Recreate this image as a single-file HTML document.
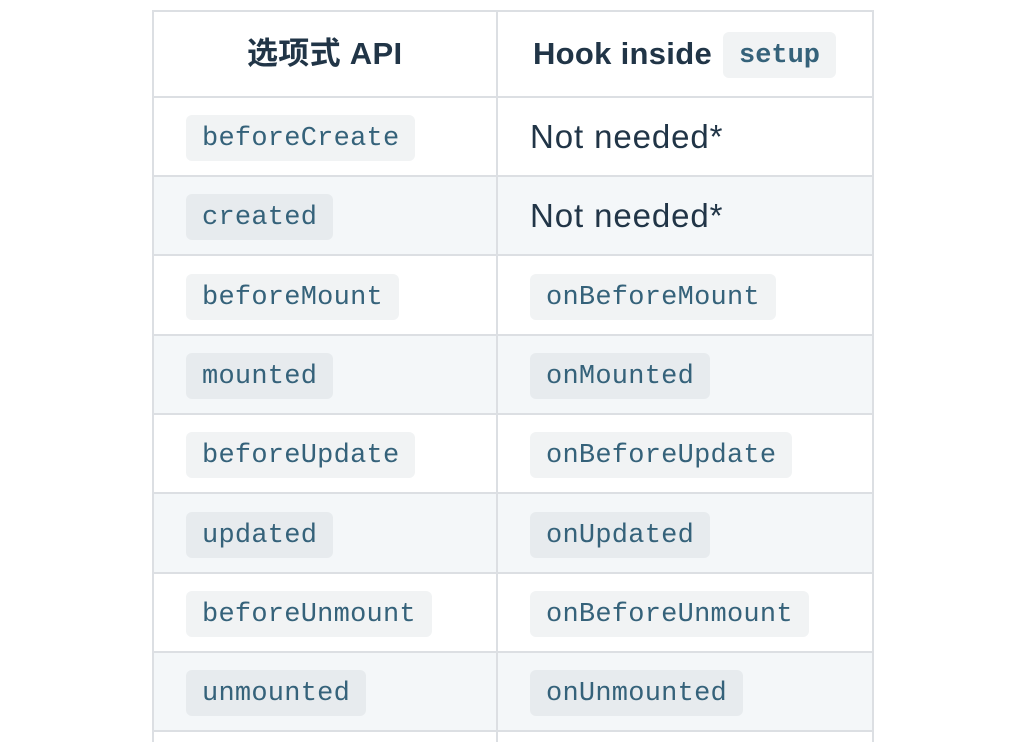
<!DOCTYPE html>
<html><head><meta charset="utf-8"><style>
body{margin:0;width:1026px;height:742px;background:#fff;position:relative;overflow:hidden;font-family:"Liberation Sans","Noto Sans CJK SC",sans-serif;color:#213547}
.h{position:absolute;height:2px;left:152px;width:722px;background:#dcdfe3}
.v{position:absolute;width:2px;top:10px;height:732px;background:#dcdfe3}
.row{position:absolute;left:153px;width:720px;height:78px}
.s{background:#f4f7f9}
code{position:absolute;height:46px;line-height:49px;padding:0 16px;border-radius:6px;background:#f1f3f4;color:#35627a;font-family:"Liberation Mono",monospace;font-size:27px;letter-spacing:0.25px;box-sizing:border-box}
code.d{background:#e7ebee}
.t{position:absolute;font-size:33px;letter-spacing:0.9px;line-height:46px}
.hd{position:absolute;font-weight:bold;font-size:31px;line-height:46px;letter-spacing:0.3px}
</style></head><body>
<div class="row s" style="top:177px"></div>
<div class="row s" style="top:336px"></div>
<div class="row s" style="top:494px"></div>
<div class="row s" style="top:653px"></div>

<div class="h" style="top:10px"></div>
<div class="h" style="top:96px"></div>
<div class="h" style="top:175px"></div>
<div class="h" style="top:254px"></div>
<div class="h" style="top:334px"></div>
<div class="h" style="top:413px"></div>
<div class="h" style="top:492px"></div>
<div class="h" style="top:572px"></div>
<div class="h" style="top:651px"></div>
<div class="h" style="top:730px"></div>
<div class="v" style="left:152px"></div>
<div class="v" style="left:496px"></div>
<div class="v" style="left:872px"></div>

<div class="hd" style="left:247px;top:31px">选项式 API</div>
<div class="hd" style="left:533px;top:31px">Hook inside</div>
<code style="left:723px;top:32px;font-weight:bold;padding:0 16px;letter-spacing:0">setup</code>

<code style="left:186px;top:115px">beforeCreate</code>
<div class="t" style="left:530px;top:114px">Not needed*</div>
<code class="d" style="left:186px;top:194px">created</code>
<div class="t" style="left:530px;top:193px">Not needed*</div>
<code style="left:186px;top:274px">beforeMount</code>
<code style="left:530px;top:274px">onBeforeMount</code>
<code class="d" style="left:186px;top:353px">mounted</code>
<code class="d" style="left:530px;top:353px">onMounted</code>
<code style="left:186px;top:432px">beforeUpdate</code>
<code style="left:530px;top:432px">onBeforeUpdate</code>
<code class="d" style="left:186px;top:512px">updated</code>
<code class="d" style="left:530px;top:512px">onUpdated</code>
<code style="left:186px;top:591px">beforeUnmount</code>
<code style="left:530px;top:591px">onBeforeUnmount</code>
<code class="d" style="left:186px;top:670px">unmounted</code>
<code class="d" style="left:530px;top:670px">onUnmounted</code>
</body></html>
